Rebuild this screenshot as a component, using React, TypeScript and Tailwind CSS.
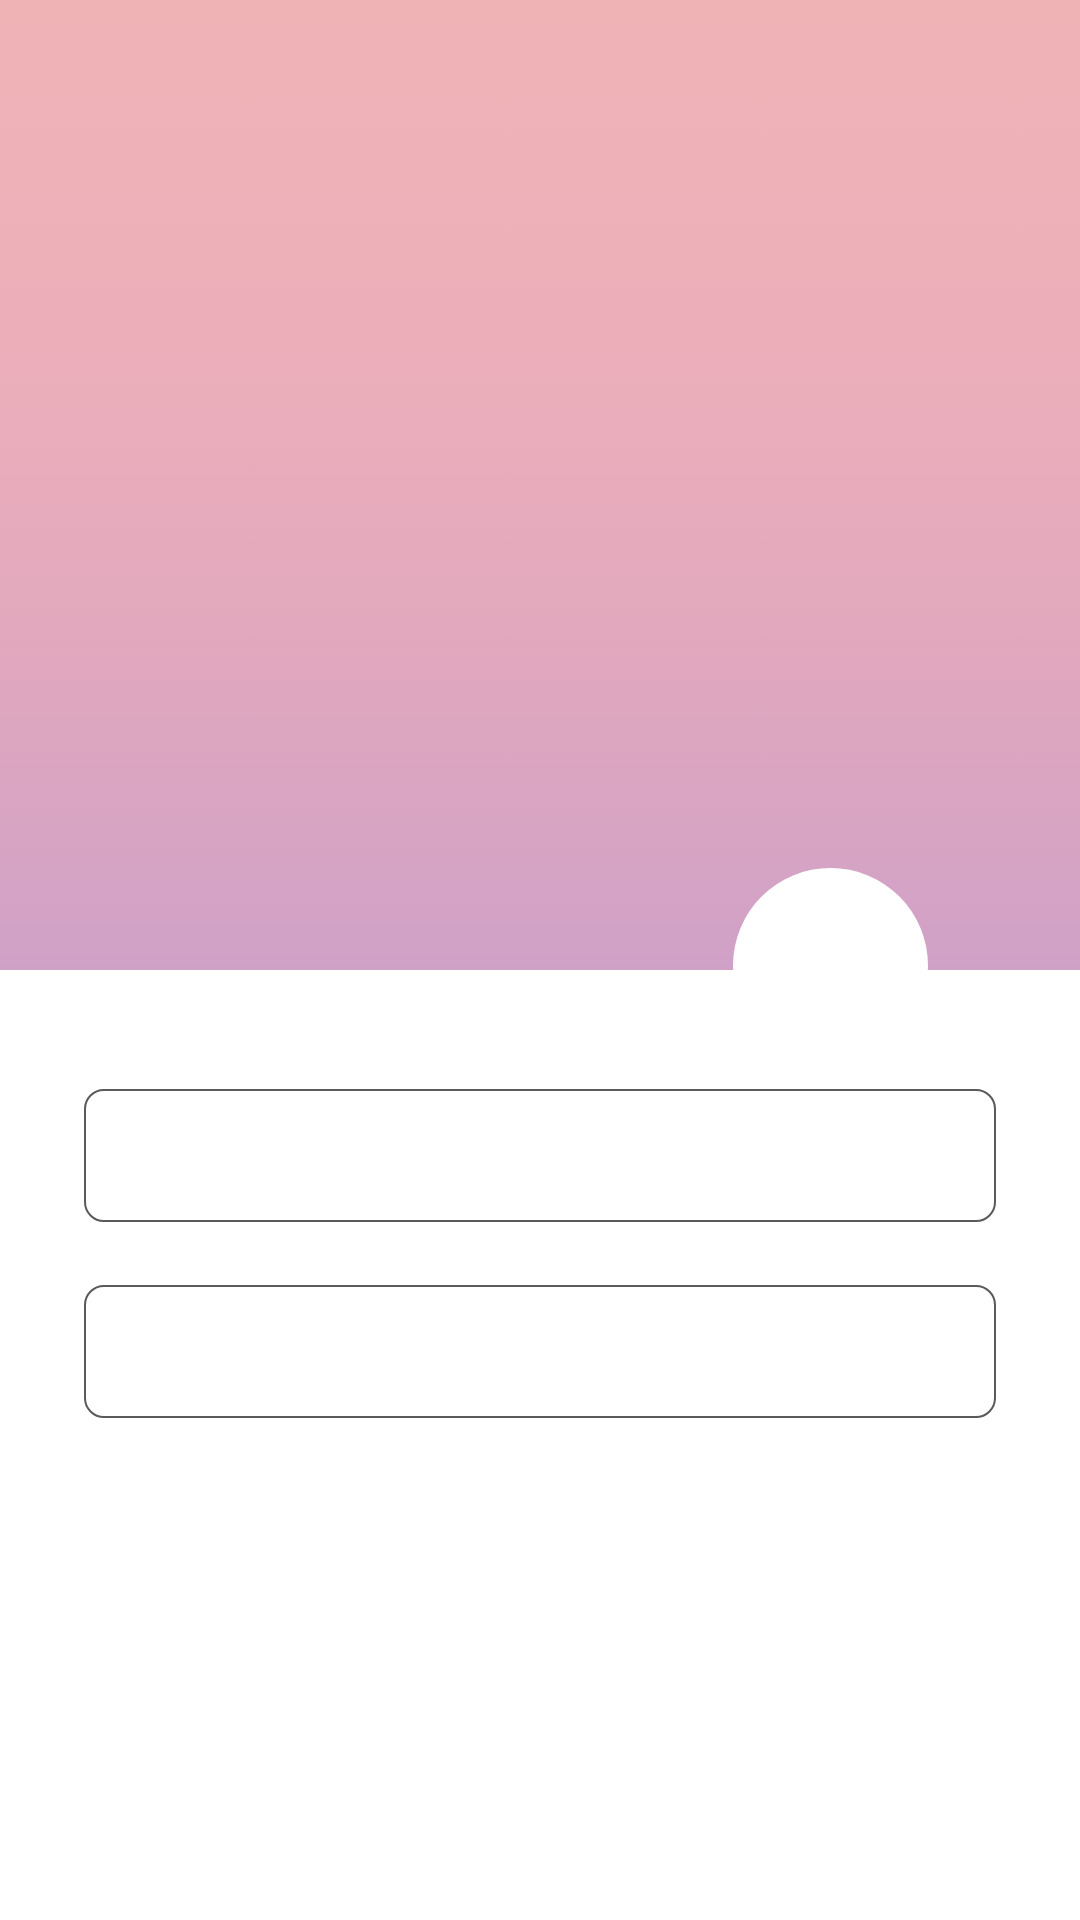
export default function App() {
  return (
    <div className="min-h-[1920px] w-[1080px] bg-white font-['Liberation_Sans',sans-serif]">
      <div className="relative h-[970px] bg-[linear-gradient(180deg,#efb3b6_0%,#ecafba_35%,#e2a8bd_65%,#d0a1c7_100%)]">
        {/* avatar placeholder overlapping the header edge */}
        <div className="absolute left-[733px] top-[868px] h-[195px] w-[195px] rounded-full bg-white" />
      </div>
      <div className="flex flex-col gap-[63px] px-[84px] pt-[119px]">
        <input
          className="h-[133px] w-full rounded-[20px] border-2 border-[#5a5a5a] bg-white px-6 text-3xl outline-none"
          aria-label="field one"
        />
        <input
          className="h-[133px] w-full rounded-[20px] border-2 border-[#5a5a5a] bg-white px-6 text-3xl outline-none"
          aria-label="field two"
        />
      </div>
    </div>
  );
}
